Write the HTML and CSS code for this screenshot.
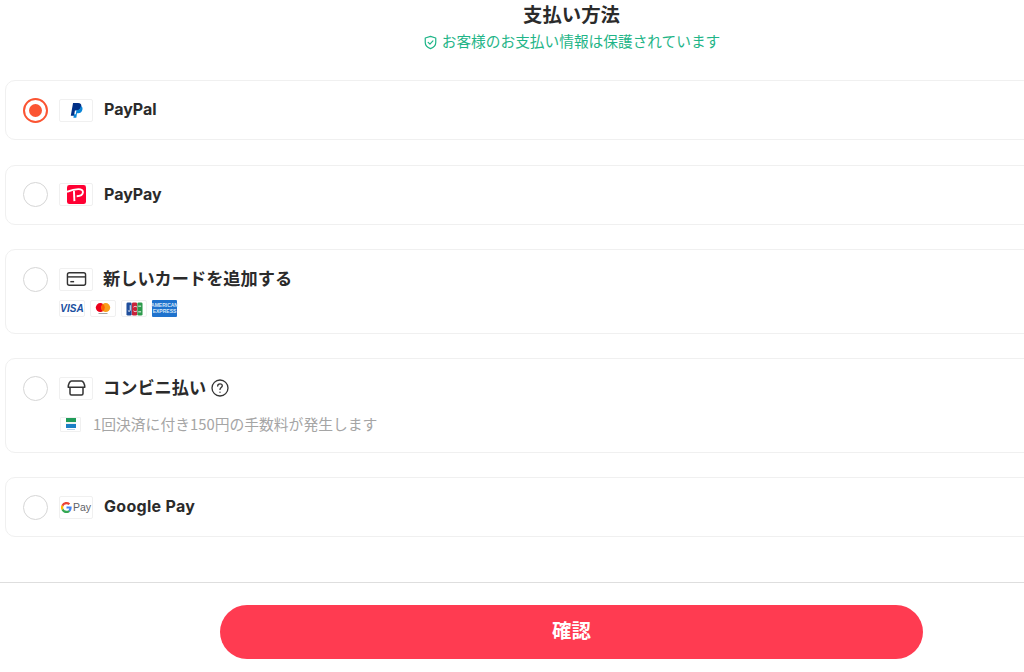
FILE: index.html
```html
<!DOCTYPE html>
<html lang="ja">
<head>
<meta charset="utf-8">
<title>支払い方法</title>
<link rel="stylesheet" href="styles.css">
</head>
<body>
<div class="page">
  <header class="head">
    <h1 class="title">支払い方法</h1>
    <p class="secure">
      <svg class="shield" viewBox="0 0 16 16" width="15" height="15" fill="none" stroke="#1fb588" stroke-width="1.3" stroke-linejoin="round" stroke-linecap="round"><path d="M8 1.4 13.6 3.2V8c0 3.3-2.6 5.5-5.6 6.6C5 13.500 2.400 11.300 2.400 8V3.200Z"/><path d="M5.500 7.900 7.400 9.700 10.600 6.300"/></svg>
      <span>お客様のお支払い情報は保護されています</span>
    </p>
  </header>
  <section class="list">
    <div class="card">
      <span class="radio on"></span>
      <div class="body">
        <div class="row">
          <span class="logo">
            <svg viewBox="0 0 16 18" width="15" height="17"><path fill="#003087" d="M4.300 1h5.300c2.700 0 4 1.500 3.500 3.800-.6 2.800-2.500 4.200-5.100 4.200H6.300l-.9 5.700H1.900Z"/><path fill="#0a86d8" d="M12.800 4.300c1.500.8 1.900 2.200 1.500 3.900-.6 2.500-2.300 3.800-4.600 3.800H8.500l-.7 4.700H4.700l.7-3.600h1.800l.8-4.600h1.300c1.800 0 3-1.700 3.500-4.200Z"/></svg>
          </span>
          <span class="name">PayPal</span>
        </div>
      </div>
    </div>
    <div class="card">
      <span class="radio"></span>
      <div class="body">
        <div class="row">
          <span class="logo">
            <svg viewBox="0 0 20 20" width="19" height="19"><rect width="20" height="20" rx="2.500" fill="#ff0033"/><path fill="none" stroke="#fff" stroke-width="2" d="M0 7.200C4 5.400 8 4.300 12 4.300c3.200 0 5 1.500 4.700 3.700-.3 2.300-2.700 3.700-6.500 3.800"/><path fill="none" stroke="#fff" stroke-width="2" d="M7.300 6 7.800 17"/></svg>
          </span>
          <span class="name">PayPay</span>
        </div>
      </div>
    </div>
    <div class="card">
      <span class="radio"></span>
      <div class="body">
        <div class="row">
          <span class="logo">
            <svg viewBox="0 0 22 16" width="21" height="16" fill="none" stroke="#333" stroke-width="1.500"><rect x="1.500" y="1.500" width="19" height="13" rx="2"/><path d="M1.500 5.800h19"/><path d="M4.500 10.800h4"/></svg>
          </span>
          <span class="name jp">新しいカードを追加する</span>
        </div>
        <div class="brands">
          <span class="brand"><span class="visa">VISA</span></span>
          <span class="brand">
            <svg viewBox="0 0 20 14" width="18" height="13"><circle cx="7" cy="6" r="5" fill="#eb001b"/><circle cx="13" cy="6" r="5" fill="#f79e1b"/><path fill="#ff5f00" d="M10 2a5 5 0 0 1 0 8 5 5 0 0 1 0-8Z"/><rect x="5" y="12" width="10" height="1" fill="#999"/></svg>
          </span>
          <span class="brand">
            <svg viewBox="0 0 18 14" width="17" height="14"><rect x="0.500" width="5.500" height="14" rx="1.500" fill="#1f4e9c"/><rect x="6.300" width="5.500" height="14" rx="1.500" fill="#c8233a"/><rect x="12" width="5.500" height="14" rx="1.500" fill="#2c9a4b"/><path d="M2 8.500c1 1.500 2.500 1 2.500-.5V3M8 5c1-1 3-1 3.500 0M8 9c1 1 3 1 3.500 0M13 4h3M13 10h3" fill="none" stroke="#fff" stroke-width="1"/></svg>
          </span>
          <span class="amex"><span>AMERICAN</span><span>EXPRESS</span></span>
        </div>
      </div>
    </div>
    <div class="card">
      <span class="radio"></span>
      <div class="body">
        <div class="row">
          <span class="logo">
            <svg viewBox="0 0 19 16" width="19" height="16" fill="none" stroke="#333" stroke-width="1.500" stroke-linejoin="round"><path d="M4.500 1h10c1.600 0 3.300 3 3.300 6.300H1.200C1.200 4 2.900 1 4.500 1Z"/><path d="M3 7.300V13.500A1.500 1.500 0 0 0 4.500 15h10a1.500 1.500 0 0 0 1.500-1.500V7.300"/></svg>
          </span>
          <span class="name jp">コンビニ払い</span>
          <svg class="help" viewBox="0 0 18 18" width="18" height="18" fill="none" stroke="#333" stroke-width="1.300" stroke-linecap="round"><circle cx="9" cy="9" r="8"/><path d="M6.700 7c0-1.400 1-2.200 2.300-2.200s2.300.8 2.300 2c0 1.700-2.300 1.800-2.300 3.600"/><path d="M9 13.200v.1"/></svg>
        </div>
        <div class="fee">
          <span class="store">
            <svg viewBox="0 0 10 12" width="10" height="12"><rect width="10" height="4" fill="#1f9c58"/><rect y="4" width="10" height="2" fill="#eef3ee"/><rect y="6" width="10" height="4" fill="#1b7fc4"/><rect x="1" y="11" width="8" height="1" fill="#b9d3ea"/></svg>
          </span>
          <span class="fee-text">1回決済に付き150円の手数料が発生します</span>
        </div>
      </div>
    </div>
    <div class="card">
      <span class="radio"></span>
      <div class="body">
        <div class="row">
          <span class="logo gpay">
            <svg viewBox="0 0 12 12" width="11" height="11"><path fill="#4285f4" d="M11.600 6.100c0-.4 0-.8-.1-1.200H6v2.300h3.100c-.1.800-.6 1.400-1.200 1.800l1.900 1.500c1.100-1 1.800-2.500 1.800-4.400Z"/><path fill="#34a853" d="M6 12c1.600 0 3-.5 3.900-1.500L8 9c-.5.400-1.200.6-2 .6-1.600 0-2.900-1-3.400-2.500l-2 1.500C1.600 10.600 3.600 12 6 12Z"/><path fill="#fbbc04" d="M2.600 7.100a3.500 3.500 0 0 1 0-2.300l-2-1.500a6 6 0 0 0 0 5.300Z"/><path fill="#ea4335" d="M6 2.400c.9 0 1.700.3 2.300.9L10 1.600A6 6 0 0 0 .6 3.300l2 1.500C3.100 3.400 4.400 2.400 6 2.400Z"/></svg>
            <span class="gpay-text">Pay</span>
          </span>
          <span class="name wide">Google Pay</span>
        </div>
      </div>
    </div>
  </section>
  <footer class="foot">
    <button class="confirm" type="button">確認</button>
  </footer>
</div>
</body>
</html>
```

FILE: styles.css
```css
* { box-sizing: border-box; }
html, body { margin: 0; height: 100%; overflow: hidden; background: #fff; }
body { font-family: "Inter", "Noto Sans CJK JP", sans-serif; color: #2b2b2b; }
.page { width: 1138px; padding-left: 5px; }
.head { display: flex; flex-direction: column; align-items: center; height: 80px; padding-top: 2px; }
.title { margin: 0; font-size: 19.4px; line-height: 24px; font-weight: 700; font-family: "Noto Sans CJK JP", sans-serif; }
.secure { margin: 4px 0 0; display: flex; align-items: center; gap: 4px; color: #1fb588; font-size: 14.7px; line-height: 22px; font-family: "Noto Sans CJK JP", sans-serif; }
.shield { margin-top: 2px; }
.list { display: flex; flex-direction: column; gap: 24.6px; }
.card { display: flex; align-items: flex-start; gap: 11.5px; min-height: 60px; border: 1px solid #f0f0f0; border-radius: 10px; padding: 16.5px 16px 12px 16.5px; }
.radio { flex: none; width: 25px; height: 25px; border-radius: 50%; border: 1px solid #d6d6d6; background: #fff; }
.radio.on { border: 2px solid #fb5432; display: flex; align-items: center; justify-content: center; }
.radio.on::after { content: ""; width: 13px; height: 13px; border-radius: 50%; background: #fb5432; }
.body { display: flex; flex-direction: column; padding-top: 0.5px; }
.row { display: flex; align-items: center; height: 24px; gap: 11px; }
.logo { flex: none; width: 34px; height: 23px; border: 1px solid #f0f0f0; border-radius: 2px; display: flex; align-items: center; justify-content: center; background: #fff; }
.name { font-size: 16px; font-weight: 700; line-height: 22px; margin-top: -2px; color: #2b2b2b; }
.name.wide { letter-spacing: 0.3px; }
.name.jp { font-family: "Noto Sans CJK JP", sans-serif; font-size: 17.2px; margin: -3px 0 0 -1px; }
.help { margin-left: -6px; margin-top: 0; }
.brands { display: flex; gap: 5px; margin-top: 9px; height: 17px; margin-bottom: 3.4px; }
.brand { width: 26px; height: 17px; border: 1px solid #f0f0f0; border-radius: 2px; display: flex; align-items: center; justify-content: center; }
.visa { font: italic 700 10px/1 "Liberation Sans", sans-serif; color: #1a4fa0; }
.amex { width: 25px; height: 17px; background: #1f72cd; border-radius: 1px; display: flex; flex-direction: column; align-items: center; justify-content: center; font: 700 5px/5.5px "Liberation Sans", sans-serif; color: #d5e6f7; }
.fee { display: flex; align-items: center; gap: 12px; margin-top: 14px; margin-bottom: 5.6px; }
.store { flex: none; width: 21px; height: 15px; margin-left: 1px; border: 1px solid #f0f0f0; border-radius: 1px; display: flex; align-items: center; justify-content: center; }
.fee-text { font-size: 14.8px; line-height: 20px; color: #a5a5a5; font-family: "Noto Sans CJK JP", sans-serif; }
.gpay { gap: 1px; }
.gpay-text { font-size: 10.500px; color: #5f6368; font-family: "Liberation Sans", sans-serif; }
.foot { margin-top: 45px; border-top: 1px solid #dedede; margin-left: -5px; padding: 22px 0 0 220px; }
.confirm { display: block; width: 703px; height: 54px; border: 0; border-radius: 27px; padding: 0 0 5px; background: #ff3b51; color: #fff; font-size: 19.4px; font-weight: 700; font-family: "Noto Sans CJK JP", sans-serif; }
```
